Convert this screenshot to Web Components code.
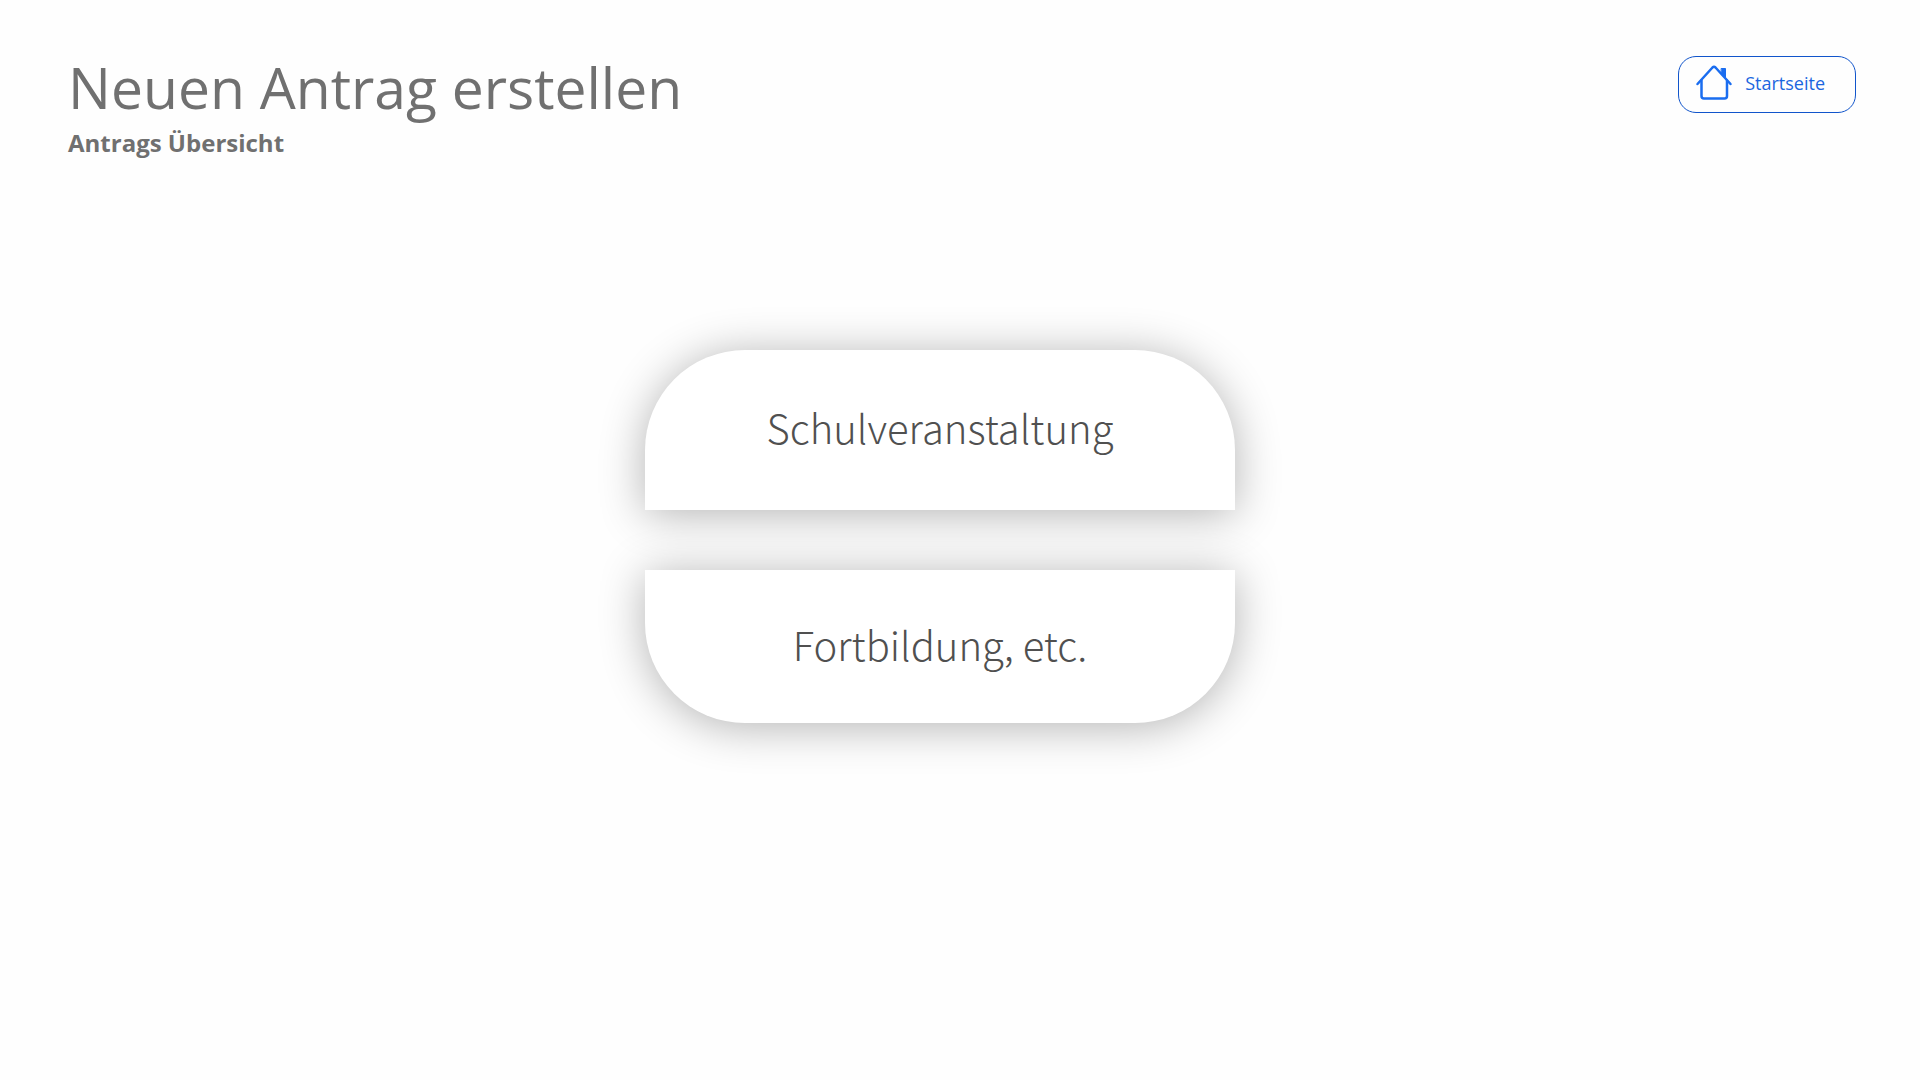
<!DOCTYPE html>
<html lang="de">
<head>
<meta charset="utf-8">
<title>Neuen Antrag erstellen</title>
<style>
  body { margin: 0; background: #fefefe; font-family: "Segoe UI", "Open Sans", "Noto Sans", sans-serif; }
</style>
</head>
<body>
<antrag-page>
  <page-header slot="header">
    <span slot="title">Neuen Antrag erstellen</span>
    <span slot="subtitle">Antrags Übersicht</span>
    <home-button slot="action">Startseite</home-button>
  </page-header>
  <choice-button shape="top">Schulveranstaltung</choice-button>
  <choice-button shape="bottom">Fortbildung, etc.</choice-button>
</antrag-page>
<script>
  const define = (name, html) => {
    const template = document.createElement("template");
    template.innerHTML = html;
    customElements.define(name, class extends HTMLElement {
      constructor() {
        super();
        this.attachShadow({ mode: "open" }).append(template.content.cloneNode(true));
      }
    });
  };

  define("antrag-page", `
    <style>
      :host { display: flex; flex-direction: column; min-height: 100vh; }
      main { display: flex; flex-direction: column; align-items: center; gap: 60px; padding: 190px 40px 80px 0; }
    </style>
    <slot name="header"></slot>
    <main><slot></slot></main>
  `);

  define("page-header", `
    <style>
      :host { display: flex; justify-content: space-between; align-items: flex-start; padding: 48px 64px 0 68px; color: #707070; }
      h1 { margin: 0; font-size: 57px; line-height: 78px; font-weight: 400; }
      h2 { margin: 0; font-size: 24px; line-height: 34px; font-weight: 700; }
      .action { padding-top: 8px; }
    </style>
    <div>
      <h1><slot name="title"></slot></h1>
      <h2><slot name="subtitle"></slot></h2>
    </div>
    <div class="action"><slot name="action"></slot></div>
  `);

  define("home-button", `
    <style>
      :host { display: block; }
      button { display: flex; align-items: center; gap: 12px; box-sizing: border-box; height: 57px; padding: 0 30px 3px 16px;
        border: 1px solid #1155cb; border-radius: 18px; background: #fefefe; color: #1b66e0; font: 400 18px/24px "Segoe UI", "Open Sans", sans-serif; cursor: pointer; }
      svg { display: block; width: 38px; height: 38px; }
    </style>
    <button type="button">
      <svg viewBox="0 0 38 38" fill="none" stroke="#1a6df0" stroke-width="2.5" stroke-linecap="round" stroke-linejoin="round" aria-hidden="true">
        <path d="M2.500 20 17.500 3.500Q19 2 20.500 3.500L35.500 20"/>
        <path d="M6.500 16.500V32Q6.500 34.500 9 34.500H29.500Q32 34.500 32 32V16.500"/>
        <path d="M26.500 4.500H30.500V13.500L26.500 9.500Z" fill="#1a6df0" stroke-width="1"/>
      </svg>
      <span><slot></slot></span>
    </button>
  `);

  define("choice-button", `
    <style>
      :host { display: block; width: 590px; max-width: 100%; --round: 100px; }
      button { display: block; width: 100%; height: 160px; padding: 0 0 6px; border: 0; background: #fff; color: #505050;
        font: 300 40px/60px "Yu Gothic Light", "Noto Sans CJK JP", sans-serif; cursor: pointer;
        box-shadow: 0 4px 45px rgba(0,0,0,.3); }
      :host([shape="top"]) button { border-radius: var(--round) var(--round) 0 0; }
      :host([shape="bottom"]) button { height: 153px; border-radius: 0 0 var(--round) var(--round); }
    </style>
    <button type="button"><slot></slot></button>
  `);
</script>
</body>
</html>
